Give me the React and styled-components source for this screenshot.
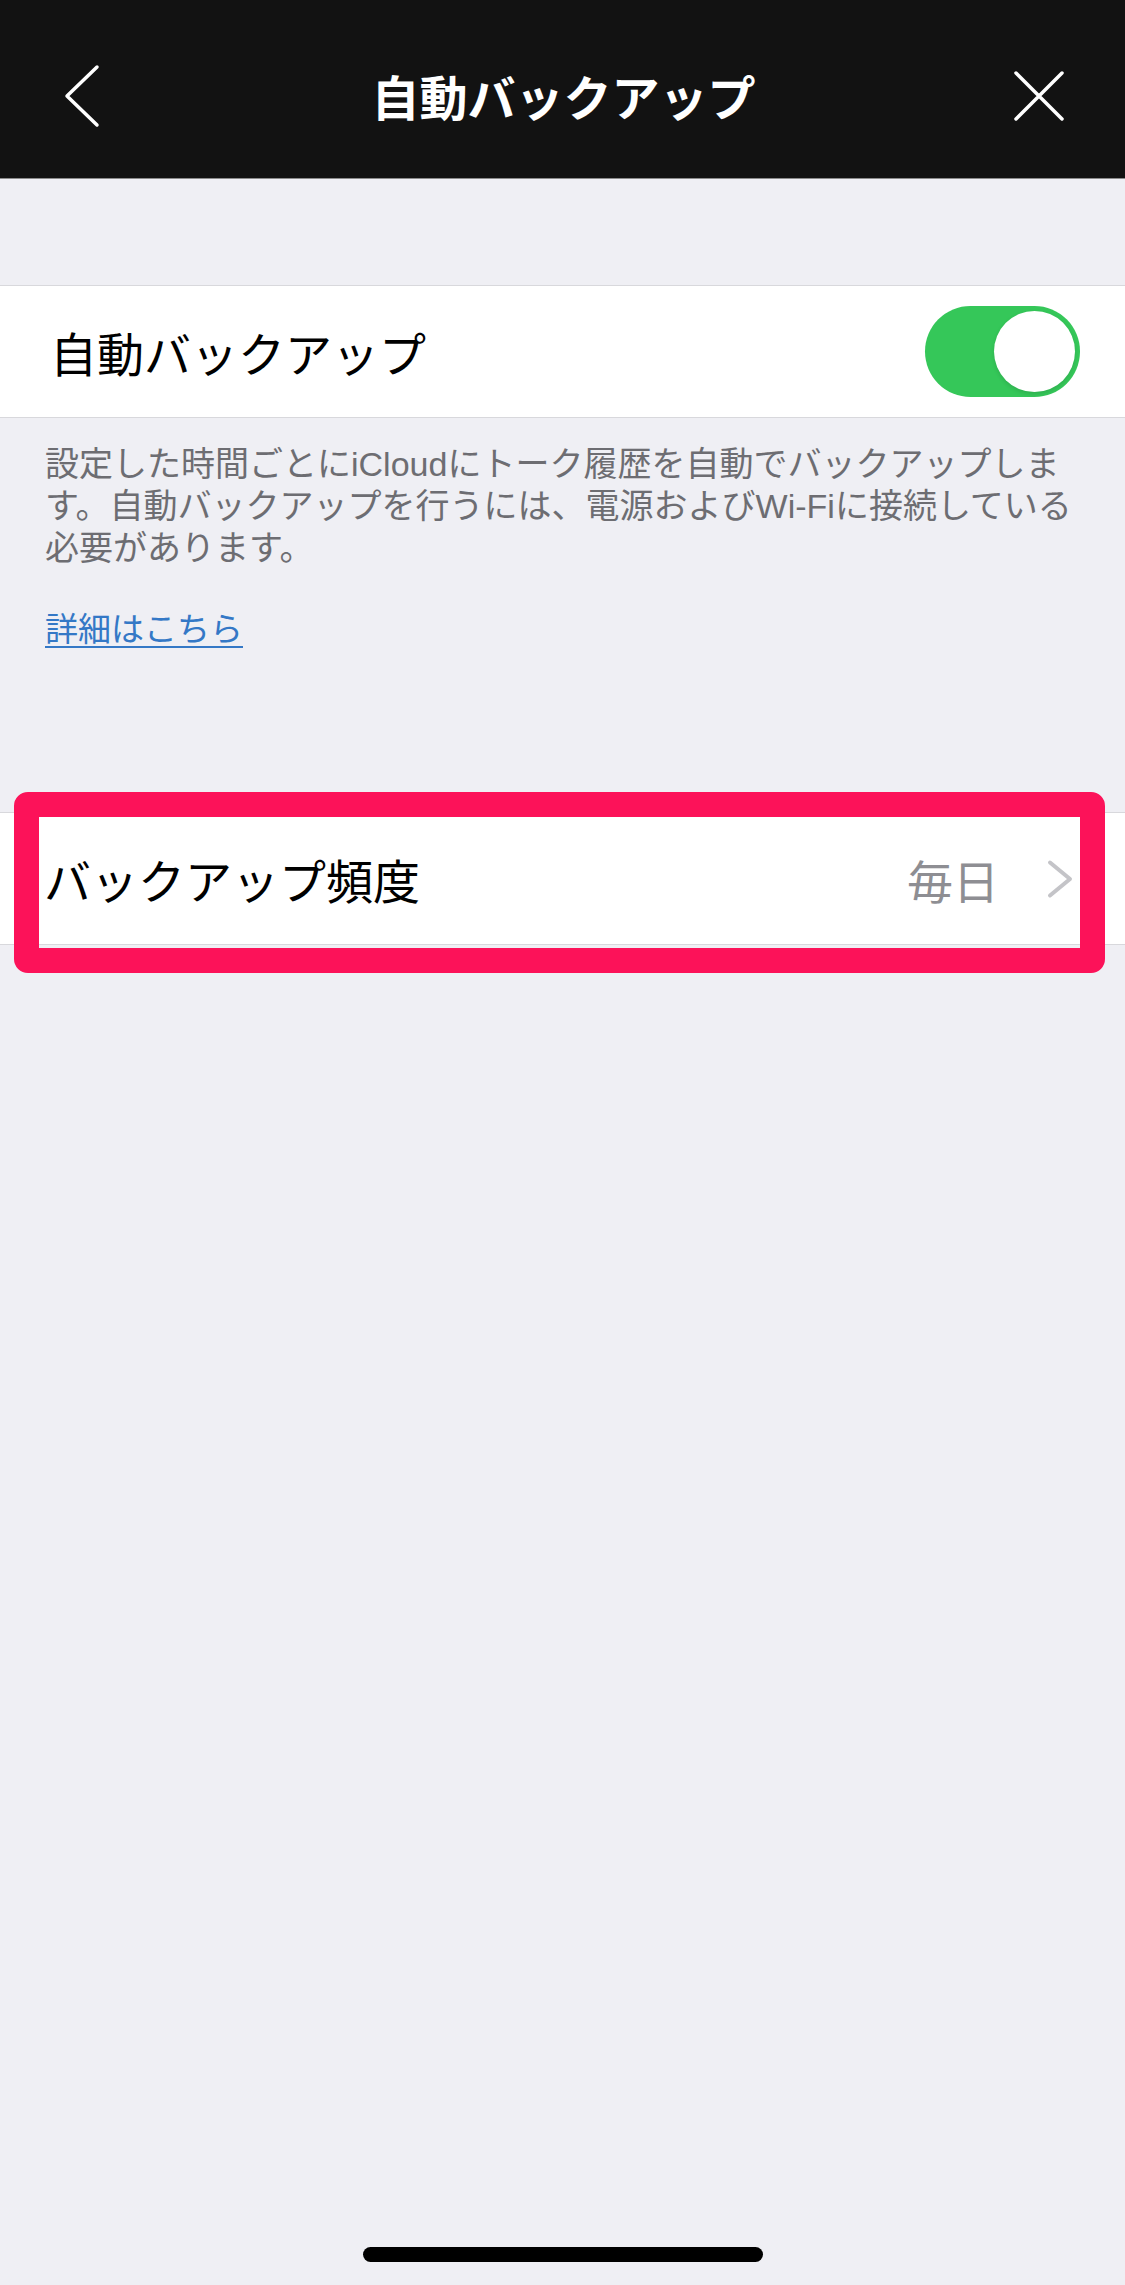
import React from 'react';
import styled, { createGlobalStyle } from 'styled-components';

const GlobalStyle = createGlobalStyle`
  html, body {
    margin: 0;
    padding: 0;
  }
  body {
    background: #efeff4;
    font-family: "Noto Sans CJK JP", "Noto Sans", sans-serif;
    -webkit-font-smoothing: antialiased;
  }
`;

const Screen = styled.div`
  width: 1125px;
  height: 2285px;
  display: flex;
  flex-direction: column;
  background: #efeff4;
  overflow: hidden;
`;

const NavBar = styled.header`
  height: 179px;
  box-sizing: border-box;
  padding: 14px 60px 0 62px;
  background: #121212;
  border-bottom: 1px solid #8c8c8c;
  display: grid;
  grid-template-columns: 1fr auto 1fr;
  align-items: center;
`;

const NavButton = styled.button`
  background: none;
  border: 0;
  padding: 0;
  display: flex;
  justify-self: ${(p) => (p.$end ? 'end' : 'start')};
  cursor: pointer;
`;

const NavTitle = styled.h1`
  margin: -2px 0 0;
  color: #ffffff;
  font-size: 48px;
  font-weight: 700;
  line-height: 1;
`;

const Group = styled.section`
  margin-top: ${(p) => p.$gap}px;
`;

const Row = styled.div`
  position: relative;
  height: 133px;
  box-sizing: border-box;
  background: #ffffff;
  border-top: 1px solid #d8d8dc;
  border-bottom: 1px solid #d8d8dc;
  padding: 0 52px 0 ${(p) => p.$inset}px;
  display: flex;
  align-items: center;
  gap: 48px;
`;

const RowLabel = styled.span`
  flex: 1;
  font-size: 47px;
  color: #000000;
  line-height: 1;
`;

const RowValue = styled.span`
  font-size: 46px;
  color: #8e8e93;
  line-height: 1;
`;

const Toggle = styled.span`
  position: relative;
  width: 155px;
  height: 91px;
  border-radius: 46px;
  background: #35c759;
  margin-right: -7px;

  &::after {
    content: '';
    position: absolute;
    top: 5px;
    right: 5px;
    width: 81px;
    height: 81px;
    border-radius: 50%;
    background: #ffffff;
    box-shadow: 0 2px 4px rgba(0, 0, 0, 0.12);
  }
`;

const Footer = styled.div`
  padding: 25px 30px 0 45px;
  color: #6d6d72;
  font-family: "Liberation Sans", "Noto Sans CJK JP", sans-serif;
  font-size: 34px;
  line-height: 42px;
`;

const FooterLine = styled.span`
  display: block;
  white-space: nowrap;
`;

const MoreLink = styled.a`
  display: inline-block;
  margin-top: 40px;
  color: #3478c6;
  font-size: 33px;
  line-height: 42px;
  text-decoration: underline;
  text-decoration-thickness: 2px;
  text-underline-offset: 5px;
`;

const Highlight = styled.span`
  position: absolute;
  top: -21px;
  bottom: -29px;
  left: 14px;
  right: 20px;
  border: 25px solid #fc1259;
  border-radius: 14px;
  pointer-events: none;
`;

const HomeIndicator = styled.div`
  margin-top: auto;
  margin-bottom: 23px;
  align-self: center;
  width: 400px;
  height: 15px;
  border-radius: 8px;
  background: #000000;
`;

function BackIcon() {
  return (
    <svg width="40" height="64" viewBox="0 0 40 64" fill="none">
      <polyline points="35,3 5,32 35,61" stroke="#fff" strokeWidth="3.5" strokeLinecap="round" strokeLinejoin="round" />
    </svg>
  );
}

function CloseIcon() {
  return (
    <svg width="52" height="52" viewBox="0 0 52 52" fill="none">
      <path d="M3 3 L49 49 M49 3 L3 49" stroke="#fff" strokeWidth="3.5" strokeLinecap="round" />
    </svg>
  );
}

function Chevron() {
  return (
    <svg width="26" height="40" viewBox="0 0 26 40" fill="none">
      <polyline points="3,3.5 23,20 3,36.5" stroke="#c4c4c8" strokeWidth="4" strokeLinecap="round" strokeLinejoin="round" />
    </svg>
  );
}

export default function App() {
  return (
    <>
      <GlobalStyle />
      <Screen>
        <NavBar>
          <NavButton aria-label="戻る">
            <BackIcon />
          </NavButton>
          <NavTitle>自動バックアップ</NavTitle>
          <NavButton $end aria-label="閉じる">
            <CloseIcon />
          </NavButton>
        </NavBar>

        <Group $gap={106}>
          <Row $inset={50}>
            <RowLabel>自動バックアップ</RowLabel>
            <Toggle />
          </Row>
          <Footer>
            <FooterLine>設定した時間ごとにiCloudにトーク履歴を自動でバックアップしま</FooterLine>
            <FooterLine>す。自動バックアップを行うには、電源およびWi-Fiに接続している</FooterLine>
            <FooterLine>必要があります。</FooterLine>
            <MoreLink>詳細はこちら</MoreLink>
          </Footer>
        </Group>

        <Group $gap={161}>
          <Row $inset={44}>
            <RowLabel>バックアップ頻度</RowLabel>
            <RowValue>毎日</RowValue>
            <Chevron />
            <Highlight />
          </Row>
        </Group>

        <HomeIndicator />
      </Screen>
    </>
  );
}
